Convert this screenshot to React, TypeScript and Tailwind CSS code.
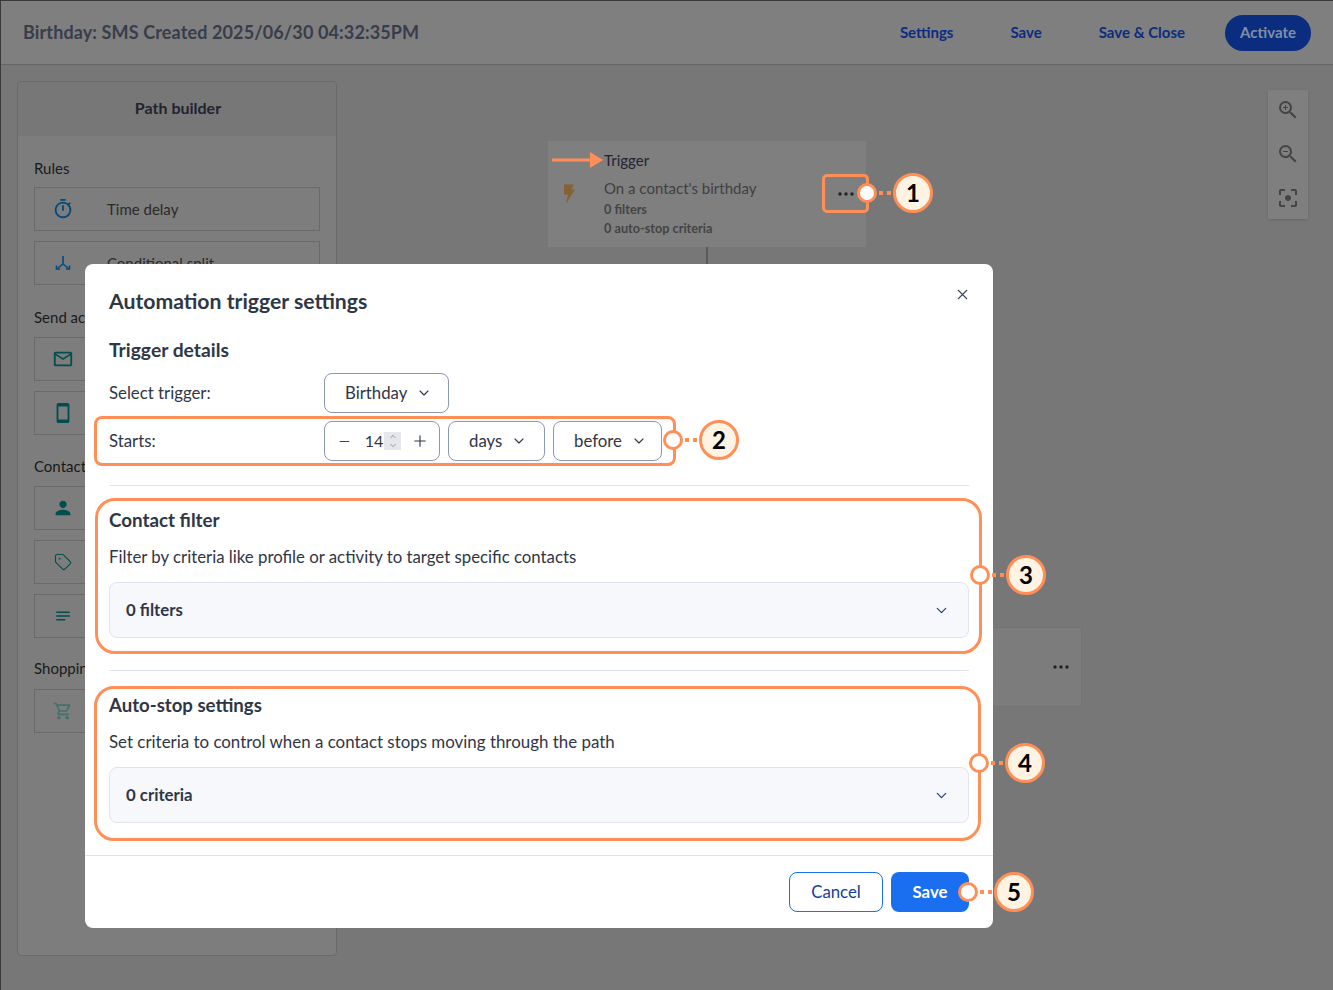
import { ChevronDown, ChevronUp, Minus, Plus, Tag, X } from 'lucide-react'
import {
  MdFilterCenterFocus,
  MdOutlineMailOutline,
  MdOutlineNotes,
  MdOutlineShoppingCart,
  MdOutlineSmartphone,
  MdOutlineTimer,
  MdOutlineZoomIn,
  MdOutlineZoomOut,
  MdPerson,
} from 'react-icons/md'
import type { ReactNode } from 'react'

function SplitIcon() {
  return (
    <svg viewBox="0 0 16 16" className="h-4 w-4" fill="none" stroke="currentColor" strokeWidth={1.6}>
      <path d="M8 1v8M8 9l-5 4M8 9l5 4" />
      <path d="M1.500 10.500v3.500h3.500M14.500 10.500v3.500h-3.500" />
    </svg>
  )
}

function BuilderRow({ icon, label, color = 'text-[#004f4c]' }: { icon: ReactNode; label?: string; color?: string }) {
  return (
    <div className="flex h-[44px] items-center border border-[#6a6a6a]">
      <span className={`flex w-[56px] justify-center ${color}`}>{icon}</span>
      {label && <span className="ml-4 text-[15px] text-[#2a2a2a]">{label}</span>}
    </div>
  )
}

function Dropdown({ label, width }: { label: string; width: string }) {
  return (
    <button className={`flex h-10 items-center gap-[9px] rounded-lg border border-[#8d99b3] pl-5 text-[16.800px] text-[#2f3645] ${width}`}>
      {label}
      <ChevronDown className="h-4 w-4" strokeWidth={1.7} />
    </button>
  )
}

function Accordion({ label }: { label: string }) {
  return (
    <div className="flex h-[56px] items-center justify-between rounded-lg border border-[#dfe4ee] bg-[#f6f8fc] pl-4 pr-[18px]">
      <span className="text-[16.800px] font-bold text-[#2f3645]">{label}</span>
      <ChevronDown className="h-[17px] w-[17px] text-[#1e3f7a]" strokeWidth={1.7} />
    </div>
  )
}

function Callout({ n, pos }: { n: number; pos: string }) {
  return (
    <div className={`absolute flex items-center ${pos}`}>
      <div className="h-[20px] w-[20px] rounded-full border-[3px] border-[#ff8f57] bg-white" />
      <div className="flex w-[16px] gap-[4px] pl-[2px]">
        <span className="h-1 w-1 bg-[#ff8f57]" />
        <span className="h-1 w-1 bg-[#ff8f57]" />
      </div>
      <div className="flex h-[40px] w-[40px] items-center justify-center rounded-full border-[3px] border-[#ff8f57] bg-[#fff3e3] text-[24px] font-bold text-black">
        {n}
      </div>
    </div>
  )
}

function Dots() {
  return (
    <svg viewBox="0 0 16 4" className="h-1 w-4" fill="currentColor">
      <circle cx="2" cy="2" r="1.700" />
      <circle cx="8" cy="2" r="1.700" />
      <circle cx="14" cy="2" r="1.700" />
    </svg>
  )
}

export default function App() {
  return (
    <div className="relative flex h-[990px] w-[1333px] flex-col overflow-hidden border-l border-t border-[#3a3a3a] bg-[#777777] font-['Lato',sans-serif]">
      {/* top bar */}
      <header className="flex h-[64px] shrink-0 items-center justify-between border-b border-[#666666] bg-[#7f7f7f] pl-[22px] pr-[22px]">
        <h1 className="text-[18px] font-bold tracking-[0.12px] text-[#373d4a]">Birthday: SMS Created 2025/06/30 04:32:35PM</h1>
        <div className="flex items-center text-[15px] font-bold text-[#0a2d80]">
          <span>Settings</span>
          <span className="ml-[57px]">Save</span>
          <span className="ml-[57px]">Save &amp; Close</span>
          <span className="ml-[40px] flex h-[36px] w-[86px] items-center justify-center rounded-full bg-[#0a2d80] text-[#7f8fa8]">Activate</span>
        </div>
      </header>

      {/* path builder */}
      <aside className="ml-[16px] mt-[16px] h-[875px] w-[320px] rounded-[4px] border border-[#6a6a6a] bg-[#7d7d7d]">
        <div className="flex h-[54px] items-center justify-center rounded-t-[4px] bg-[#777777] pb-[2px] pl-[2px] text-[16px] font-bold text-[#1f2430]">Path builder</div>
        <div className="px-4 pt-[22px]">
          <p className="mb-[9px] text-[15px] leading-[20px] text-[#1a1a1a]">Rules</p>
          <div className="flex flex-col gap-[10px]">
            <BuilderRow color="text-[#004a80]" icon={<MdOutlineTimer size={22} />} label="Time delay" />
            <BuilderRow color="text-[#004a80]" icon={<SplitIcon />} label="Conditional split" />
          </div>
          <p className="mb-[10px] mt-[22px] text-[15px] leading-[20px] text-[#1a1a1a]">Send ac</p>
          <div className="flex flex-col gap-[10px]">
            <BuilderRow icon={<MdOutlineMailOutline size={22} />} />
            <BuilderRow icon={<MdOutlineSmartphone size={22} />} />
          </div>
          <p className="mb-[10px] mt-[21px] text-[15px] leading-[20px] text-[#1a1a1a]">Contact</p>
          <div className="flex flex-col gap-[10px]">
            <BuilderRow icon={<MdPerson size={22} />} />
            <BuilderRow icon={<Tag size={18} strokeWidth={1.5} />} />
            <BuilderRow icon={<MdOutlineNotes size={18} />} />
          </div>
          <p className="mb-[11px] mt-[20px] text-[15px] leading-[20px] text-[#1a1a1a]">Shoppin</p>
          <BuilderRow color="text-[#44706e]" icon={<MdOutlineShoppingCart size={20} />} />
        </div>
      </aside>

      {/* canvas nodes */}
      <div className="absolute left-[547px] top-[140px] h-[106px] w-[318px] bg-[#7f7f7f] pl-[56px] pt-[10px]">
        <p className="text-[15px] leading-[18px] text-[#1f2430]">Trigger</p>
        <p className="mt-[10px] text-[15px] leading-[18px] text-[#3f3f3f]">On a contact's birthday</p>
        <p className="mt-[3px] text-[12.700px] font-bold leading-[18px] text-[#444444]">0 filters</p>
        <p className="mt-px text-[12.700px] font-bold leading-[18px] text-[#444444]">0 auto-stop criteria</p>
        <svg viewBox="0 0 12 20" className="absolute left-[15px] top-[42px] h-[21px] w-[12px] text-[#85622f]" fill="currentColor">
          <path d="M1 1h10L8 6h4L3 20l2-9H1z" />
        </svg>
        <span className="absolute left-[290px] top-[51px] text-[#222]"><Dots /></span>
      </div>
      <div className="absolute left-[705px] top-[246px] h-[20px] w-[2px] bg-[#5a5a5a]" />
      <div className="absolute left-[900px] top-[626px] h-[80px] w-[181px] border border-[#737373] bg-[#7c7c7c]">
        <span className="absolute right-[12px] top-[37px] text-[#222]"><Dots /></span>
      </div>

      {/* zoom tools */}
      <div className="absolute left-[1267px] top-[89px] flex h-[129px] w-[40px] flex-col items-center justify-between bg-[#7f7f7f] pb-[9px] pt-2 text-[#444444] shadow-sm">
        <MdOutlineZoomIn size={24} />
        <MdOutlineZoomOut size={24} />
        <MdFilterCenterFocus size={24} />
      </div>

      {/* modal */}
      <div className="absolute left-[84px] top-[263px] flex h-[664px] w-[908px] flex-col rounded-lg bg-white text-[#2f3645]">
        <button className="absolute right-[22px] top-[22px] text-[#3c4353]"><X size={17} strokeWidth={1.5} /></button>
        <div className="flex-1 px-6 pt-[23px]">
          <h2 className="text-[21.200px] font-bold leading-[28px]">Automation trigger settings</h2>
          <h3 className="mt-[21px] text-[19.300px] font-bold leading-[28px]">Trigger details</h3>
          <div className="mt-[9px] flex items-center">
            <span className="w-[215px] text-[16.800px]">Select trigger:</span>
            <Dropdown label="Birthday" width="w-[125px]" />
          </div>
          <div className="mt-[8px] flex items-center gap-2">
            <span className="w-[207px] text-[16.800px]">Starts:</span>
            <div className="flex h-10 w-[116px] items-center justify-between rounded-lg border border-[#8d99b3] pl-3 pr-[10px]">
              <Minus size={15} strokeWidth={1.5} />
              <span className="flex items-center pl-[3px] text-[16px]">
                14
                <span className="ml-px flex h-[18px] w-[17px] flex-col items-center justify-center bg-[#e6e7ec] text-[#777]">
                  <ChevronUp size={10} />
                  <ChevronDown size={10} />
                </span>
              </span>
              <Plus size={18} strokeWidth={1.5} />
            </div>
            <Dropdown label="days" width="w-[97px]" />
            <Dropdown label="before" width="w-[109px]" />
          </div>
          <hr className="mt-[24px] border-[#dfe3ea]" />
          <h3 className="mt-[20px] text-[18.800px] font-bold leading-[28px]">Contact filter</h3>
          <p className="mt-[11px] text-[16.800px] leading-[24px]">Filter by criteria like profile or activity to target specific contacts</p>
          <div className="mt-[13px]"><Accordion label="0 filters" /></div>
          <hr className="mt-[32px] border-[#dfe3ea]" />
          <h3 className="mt-[20px] text-[18.600px] font-bold leading-[28px]">Auto-stop settings</h3>
          <p className="mt-[11px] text-[16.900px] leading-[24px]">Set criteria to control when a contact stops moving through the path</p>
          <div className="mt-[13px]"><Accordion label="0 criteria" /></div>
        </div>
        <div className="flex h-[73px] items-center justify-end gap-2 border-t border-[#dfe3ea] pr-6">
          <button className="h-10 w-[94px] rounded-lg border border-[#1a6ff0] text-[16.800px] text-[#0f3d9e]">Cancel</button>
          <button className="h-10 w-[78px] rounded-lg bg-[#1a6ff0] text-[16.800px] font-bold text-white">Save</button>
        </div>
      </div>

      {/* orange annotations */}
      <svg className="absolute left-[551px] top-[151px] h-[16px] w-[52px]" viewBox="0 0 52 16" fill="#ff8f57">
        <path d="M0 6.500h38V0l13 8-13 8V9.500H0z" />
      </svg>
      <div className="absolute left-[821px] top-[173px] h-[39px] w-[47px] rounded-[5px] border-[3px] border-[#ff8f57]" />
      <div className="absolute left-[93px] top-[415px] h-[50px] w-[582px] rounded-lg border-[3px] border-[#ff8f57]" />
      <div className="absolute left-[94px] top-[497px] h-[156px] w-[887px] rounded-[20px] border-[3px] border-[#ff8f57]" />
      <div className="absolute left-[93px] top-[685px] h-[155px] w-[887px] rounded-[20px] border-[3px] border-[#ff8f57]" />

      <Callout n={1} pos="left-[856px] top-[172px]" />
      <Callout n={2} pos="left-[662px] top-[419px]" />
      <Callout n={3} pos="left-[969px] top-[554px]" />
      <Callout n={4} pos="left-[968px] top-[742px]" />
      <Callout n={5} pos="left-[957px] top-[871px]" />
    </div>
  )
}
